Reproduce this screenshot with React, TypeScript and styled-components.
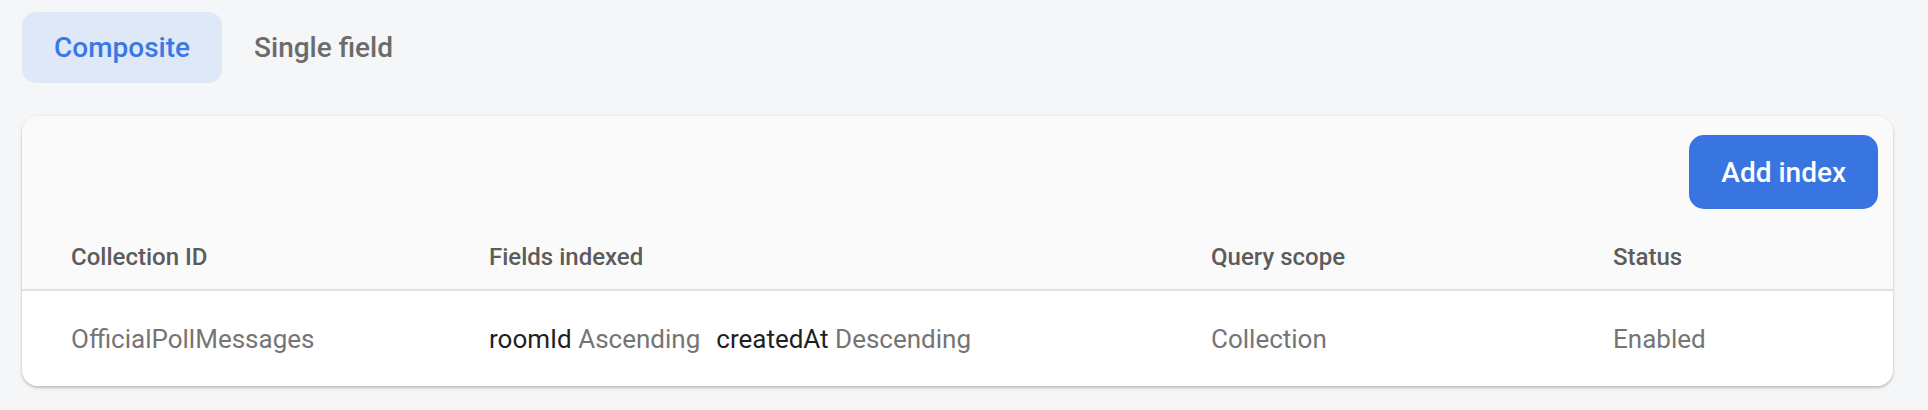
import React from 'react';
import styled, { createGlobalStyle } from 'styled-components';

const GlobalStyle = createGlobalStyle`
  html, body {
    margin: 0;
    padding: 0;
    background-color: #f5f6f8;
    font-family: Roboto, "Noto Sans", Arial, sans-serif;
  }
`;

const Page = styled.div`
  padding: 12px 35px 24px 22px;
  min-height: 410px;
  box-sizing: border-box;
  background-color: #f5f6f8;
`;

const Tabs = styled.div`
  display: flex;
  margin-bottom: 33px;
`;

const Tab = styled.button<{ $active?: boolean }>`
  height: 71px;
  padding: 0 32px;
  border: none;
  border-radius: 14px;
  font-family: Roboto, Arial, sans-serif;
  font-size: 28px;
  font-weight: 500;
  cursor: pointer;
  background-color: ${props => (props.$active ? '#dee8f7' : 'transparent')};
  color: ${props => (props.$active ? '#3a78e4' : '#6b6b6b')};
`;

const Card = styled.div`
  background-color: #ffffff;
  border-radius: 16px;
  overflow: hidden;
  box-shadow: 0 2px 3px rgba(0, 0, 0, 0.22), 0 0 2px rgba(0, 0, 0, 0.1);
`;

const Toolbar = styled.div`
  display: flex;
  justify-content: flex-end;
  padding: 19px 15px 16px;
  background-color: #fafafa;
`;

const PrimaryButton = styled.button`
  height: 74px;
  padding: 0 32px;
  border: none;
  border-radius: 15px;
  background-color: #3875e0;
  color: #ffffff;
  font-family: Roboto, Arial, sans-serif;
  font-size: 28px;
  font-weight: 500;
  cursor: pointer;
`;

const Row = styled.div<{ $header?: boolean }>`
  display: grid;
  grid-template-columns: 418px 722px 402px 1fr;
  align-items: center;
  padding-left: 49px;
  height: ${props => (props.$header ? '64px' : '95px')};
  background-color: ${props => (props.$header ? '#fafafa' : '#ffffff')};
  border-bottom: ${props => (props.$header ? '2px solid #e1e1e1' : 'none')};
`;

const HeadCell = styled.div`
  font-size: 24px;
  font-weight: 500;
  color: #5c5c5c;
`;

const Cell = styled.div`
  font-size: 26px;
  color: #757575;
`;

const Field = styled.span`
  margin-right: 16px;
`;

const FieldName = styled.span`
  color: #1f1f1f;
`;

const fields = [
  { name: 'roomId', order: 'Ascending' },
  { name: 'createdAt', order: 'Descending' },
];

const App: React.FC = () => {
  return (
    <>
      <GlobalStyle />
      <Page>
        <Tabs>
          <Tab $active>Composite</Tab>
          <Tab>Single field</Tab>
        </Tabs>

        <Card>
          <Toolbar>
            <PrimaryButton>Add index</PrimaryButton>
          </Toolbar>
          <Row $header>
            <HeadCell>Collection ID</HeadCell>
            <HeadCell>Fields indexed</HeadCell>
            <HeadCell>Query scope</HeadCell>
            <HeadCell>Status</HeadCell>
          </Row>
          <Row>
            <Cell>OfficialPollMessages</Cell>
            <Cell>
              {fields.map(f => (
                <Field key={f.name}>
                  <FieldName>{f.name}</FieldName> {f.order}
                </Field>
              ))}
            </Cell>
            <Cell>Collection</Cell>
            <Cell>Enabled</Cell>
          </Row>
        </Card>
      </Page>
    </>
  );
};

export default App;
